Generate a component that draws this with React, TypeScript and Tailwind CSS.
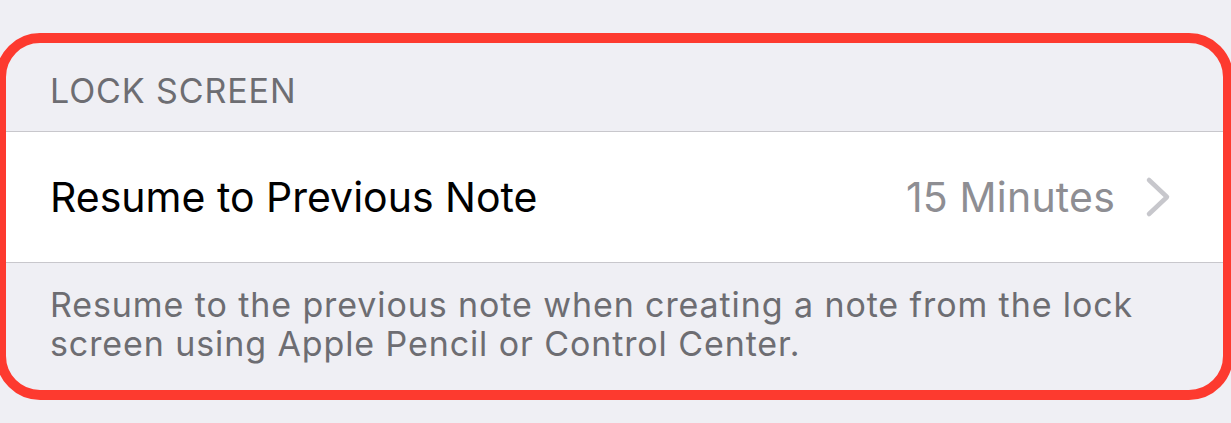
export default function App() {
  return (
    <div className="relative h-[423px] w-full overflow-hidden bg-[#efeff4] font-['Inter','Noto_Sans',sans-serif]">
      {/* section header */}
      <div className="h-[131px] pl-[50px] pt-[71px]">
        <p className="text-[34px] leading-[40px] text-[#6d6d72] tracking-[0.9px]">LOCK SCREEN</p>
      </div>

      {/* row */}
      <div className="flex h-[132px] items-center justify-between border-y border-[#c8c7cc] bg-white pl-[50px] pr-[60px]">
        <span className="text-[41px] leading-[48px] text-black">Resume to Previous Note</span>
        <div className="flex items-center gap-[30px]">
          <span className="text-[41px] leading-[48px] text-[#8e8e93] tracking-[0.2px]">15 Minutes</span>
          <svg width="26" height="42" viewBox="0 0 26 42" fill="none">
            <path d="M4 4 L22 21 L4 38" stroke="#c7c7cc" strokeWidth="4.5" strokeLinecap="round" strokeLinejoin="round" />
          </svg>
        </div>
      </div>

      {/* footer */}
      <p className="w-[1160px] pl-[50px] pt-[22px] text-[34px] leading-[39px] text-[#6d6d72] tracking-[0.9px]">
        Resume to the previous note when creating a note from the lock screen using Apple Pencil or Control Center.
      </p>

      {/* red highlight drawn over the screenshot */}
      <div className="pointer-events-none absolute top-[33px] bottom-[23px] left-[-4px] right-[-2px] rounded-[44px] border-[10px] border-[#fd3a2f]" />
    </div>
  );
}
